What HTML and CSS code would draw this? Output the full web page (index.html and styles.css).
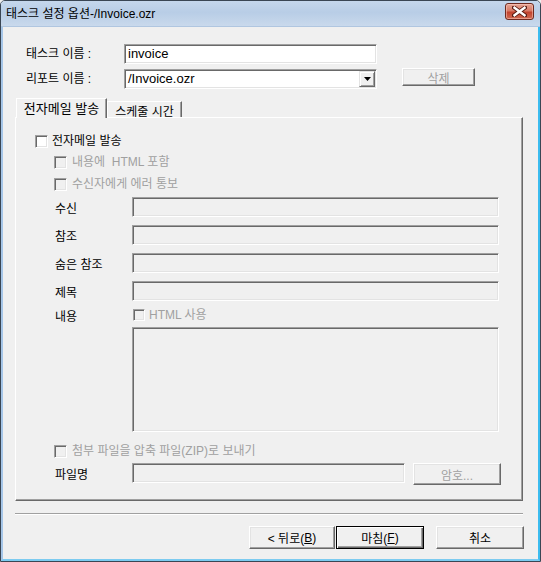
FILE: index.html
```html
<!DOCTYPE html>
<html lang="ko">
<head>
<meta charset="utf-8">
<title>태스크 설정 옵션</title>
<link rel="stylesheet" href="styles.css">
</head>
<body>
<div class="window">
  <div class="titlebar">
    <span class="title">태스크 설정 옵션-/Invoice.ozr</span>
    <span class="close">
      <svg width="15" height="11" viewBox="0 0 15 11">
        <path d="M2 1.5 L13 9.5 M13 1.5 L2 9.5" stroke="#5a1e14" stroke-width="4.2" stroke-linecap="square"/>
        <path d="M2.5 1.8 L12.5 9.2 M12.5 1.8 L2.5 9.2" stroke="#ffffff" stroke-width="2.4" stroke-linecap="square"/>
      </svg>
    </span>
  </div>
  <div class="client">
    <div class="toprow">
      <span class="toplabel">태스크 이름 :</span>
      <div class="input white topinput">invoice</div>
    </div>
    <div class="toprow second">
      <span class="toplabel">리포트 이름 :</span>
      <div class="input white topinput combo">
        <span class="combo-text">/Invoice.ozr</span>
        <span class="combo-btn"><svg width="7" height="4" viewBox="0 0 7 4"><path d="M0 0 H7 L3.5 4 Z" fill="#000"/></svg></span>
      </div>
      <span class="btn disabled delbtn">삭제</span>
    </div>

    <div class="tabs">
      <div class="tab active">전자메일 발송</div>
      <div class="tab">스케줄 시간</div>
    </div>

    <div class="panel">
      <div class="cbrow">
        <span class="cb"></span><span class="cbtext">전자메일 발송</span>
      </div>
      <div class="cbrow sub r2">
        <span class="cb dis"></span><span class="cbtext distext">내용에 &nbsp;HTML 포함</span>
      </div>
      <div class="cbrow sub r3">
        <span class="cb dis"></span><span class="cbtext distext">수신자에게 에러 통보</span>
      </div>

      <div class="field f1"><span class="flabel">수신</span><div class="input wide"></div></div>
      <div class="field"><span class="flabel">참조</span><div class="input wide"></div></div>
      <div class="field"><span class="flabel">숨은 참조</span><div class="input wide"></div></div>
      <div class="field"><span class="flabel">제목</span><div class="input wide"></div></div>
      <div class="field body-row">
        <span class="flabel">내용</span>
        <span class="cb dis"></span><span class="cbtext distext">HTML 사용</span>
      </div>
      <div class="textarea-row"><div class="input wide textarea"></div></div>

      <div class="cbrow sub zip">
        <span class="cb dis"></span><span class="cbtext distext">첨부 파일을 압축 파일(ZIP)로 보내기</span>
      </div>
      <div class="field filerow">
        <span class="flabel">파일명</span>
        <div class="input fileinput"></div>
        <span class="btn disabled pwbtn">암호...</span>
      </div>
    </div>

    <div class="separator"></div>

    <div class="buttons">
      <span class="btn bbtn back">&lt; 뒤로(<u>B</u>)</span>
      <span class="btn bbtn default">마침(<u>F</u>)</span>
      <span class="btn bbtn cancel">취소</span>
    </div>
  </div>
</div>
</body>
</html>
```
FILE: styles.css
```css
* { box-sizing: border-box; }
html, body { margin: 0; padding: 0; background: #f0f0f0; }
body {
  font-family: "Liberation Sans", "Noto Sans CJK KR", sans-serif;
  font-size: 12px;
  color: #000;
}
.window {
  width: 541px;
  height: 562px;
  border: 1px solid #3a4654;
  display: flex;
  flex-direction: column;
  background: #f0f0f0;
  border-radius: 5px 5px 0 0;
  overflow: hidden;
}
.titlebar {
  height: 26px;
  flex: none;
  display: flex;
  align-items: center;
  justify-content: space-between;
  padding: 0 6px 0 5px;
  background: linear-gradient(to bottom, #c5d7ec 0%, #b8cde6 45%, #c9d9ec 100%);
  border-bottom: 1px solid #b0c6e0;
}
.title { font-size: 12px; color: #000; line-height: 26px; padding-top: 1px; }
.close {
  width: 29px;
  height: 17px;
  margin-top: -4px;
  border: 1px solid #6e2a1f;
  border-radius: 3px;
  background: linear-gradient(to bottom, #e6a594 0%, #d77a66 45%, #c2432e 55%, #cf6a52 100%);
  box-shadow: inset 0 0 0 1px rgba(255,210,200,0.5);
  display: flex;
  align-items: center;
  justify-content: center;
}
.close svg { display: block; }
.client {
  flex: 1;
  border-left: 2px solid #a6c6e8;
  border-right: 2px solid #3cbcef;
  border-bottom: 2px solid #7ccbf0;
  padding: 17px 13px 0 12px;
  display: flex;
  flex-direction: column;
}

/* top form */
.toprow { display: flex; align-items: center; height: 20px; }
.toprow.second { margin-top: 5px; }
.toplabel { width: 109px; padding-left: 11px; line-height: 20px; }
.input {
  height: 20px;
  background: #f0f0f0;
  border: 1px solid;
  border-color: #a0a0a0 #ffffff #ffffff #a0a0a0;
  box-shadow: inset 1px 1px 0 #696969, inset -1px -1px 0 #e3e3e3;
}
.input.white { background: #fff; }
.topinput { width: 253px; padding: 0 3px; line-height: 18px; font-size: 13px; }
.combo { display: flex; align-items: center; justify-content: space-between; padding: 0 1px 0 3px; }
.combo-btn {
  width: 16px;
  height: 16px;
  background: #f0f0f0;
  border: 1px solid;
  border-color: #e3e3e3 #696969 #696969 #e3e3e3;
  box-shadow: inset 1px 1px 0 #fff, inset -1px -1px 0 #a0a0a0;
  display: flex;
  align-items: center;
  justify-content: center;
}
.combo-btn svg { display: block; }

.btn {
  display: inline-flex;
  align-items: center;
  justify-content: center;
  background: #f0f0f0;
  border: 1px solid;
  border-color: #ffffff #696969 #696969 #ffffff;
  box-shadow: inset -1px -1px 0 #a0a0a0, inset 1px 1px 0 #e3e3e3;
}
.btn.disabled { color: #a0a0a0; }
.delbtn { width: 73px; height: 18px; margin-left: 25px; margin-top: -4px; }

/* tabs */
.tabs { display: flex; align-items: flex-end; margin-top: 9px; padding-left: 1px; height: 19px; position: relative; z-index: 2; }
.tab {
  height: 16px;
  width: 75px;
  border-left: 1px solid #fff;
  border-top: 1px solid #fff;
  border-right: 1px solid #696969;
  box-shadow: inset -1px 0 0 #a0a0a0;
  display: flex;
  align-items: center;
  justify-content: center;
  background: #f0f0f0;
  padding-top: 1px;
}
.tab.active {
  width: 91px;
  height: 20px;
  margin-bottom: -1px;
  padding-top: 0;
  padding-bottom: 2px;
  font-size: 13px;
}

/* panel */
.panel {
  width: 508px;
  height: 384px;
  border: 1px solid;
  border-color: #ffffff #696969 #696969 #ffffff;
  box-shadow: inset -1px -1px 0 #a0a0a0;
  padding: 17px 0 0 19px;
  display: flex;
  flex-direction: column;
}
.cbrow { display: flex; align-items: center; height: 13px; }
.cbrow.sub { margin-left: 19px; }
.cbrow.r2 { margin-top: 8px; }
.cbrow.r3 { margin-top: 9px; }
.cbrow.zip { margin-top: 13px; }
.cb {
  width: 13px;
  height: 13px;
  flex: none;
  background: #fff;
  border: 1px solid;
  border-color: #a0a0a0 #ffffff #ffffff #a0a0a0;
  box-shadow: inset 1px 1px 0 #696969, inset -1px -1px 0 #e3e3e3;
}
.cb.dis { background: #f0f0f0; }
.cbtext { margin-left: 4px; line-height: 13px; white-space: nowrap; }
.cbrow.sub .cbtext { margin-left: 5px; }
.distext { color: #a0a0a0; }

.field { display: flex; align-items: center; height: 20px; margin-top: 8px; margin-left: 20px; }
.field.f1 { margin-top: 6px; }
.flabel { width: 77px; flex: none; }
.input.wide { width: 367px; }
.body-row { height: 12px; }
.body-row .cb { margin-left: 1px; width: 12px; height: 12px; }
.body-row .cbtext { margin-left: 4px; }
.textarea-row { margin-left: 97px; margin-top: 6px; }
.textarea { height: 105px; }
.filerow { margin-top: 5px; }
.fileinput { width: 273px; }
.pwbtn { width: 88px; height: 22px; margin-left: 8px; margin-top: 2px; }

.separator {
  width: 508px;
  height: 2px;
  margin-top: 12px;
  border-top: 1px solid #a0a0a0;
  border-bottom: 1px solid #ffffff;
}
.buttons { display: flex; justify-content: flex-end; margin-top: 11px; width: 509px; }
.bbtn { height: 23px; width: 86px; font-size: 12px; }
.bbtn u { text-decoration: underline; }
.default {
  width: 88px;
  margin-left: 1px;
  border: 1px solid #000;
  box-shadow: inset 1px 1px 0 #fff, inset -1px -1px 0 #696969, inset -2px -2px 0 #a0a0a0;
}
.cancel { width: 88px; margin-left: 12px; }
```
